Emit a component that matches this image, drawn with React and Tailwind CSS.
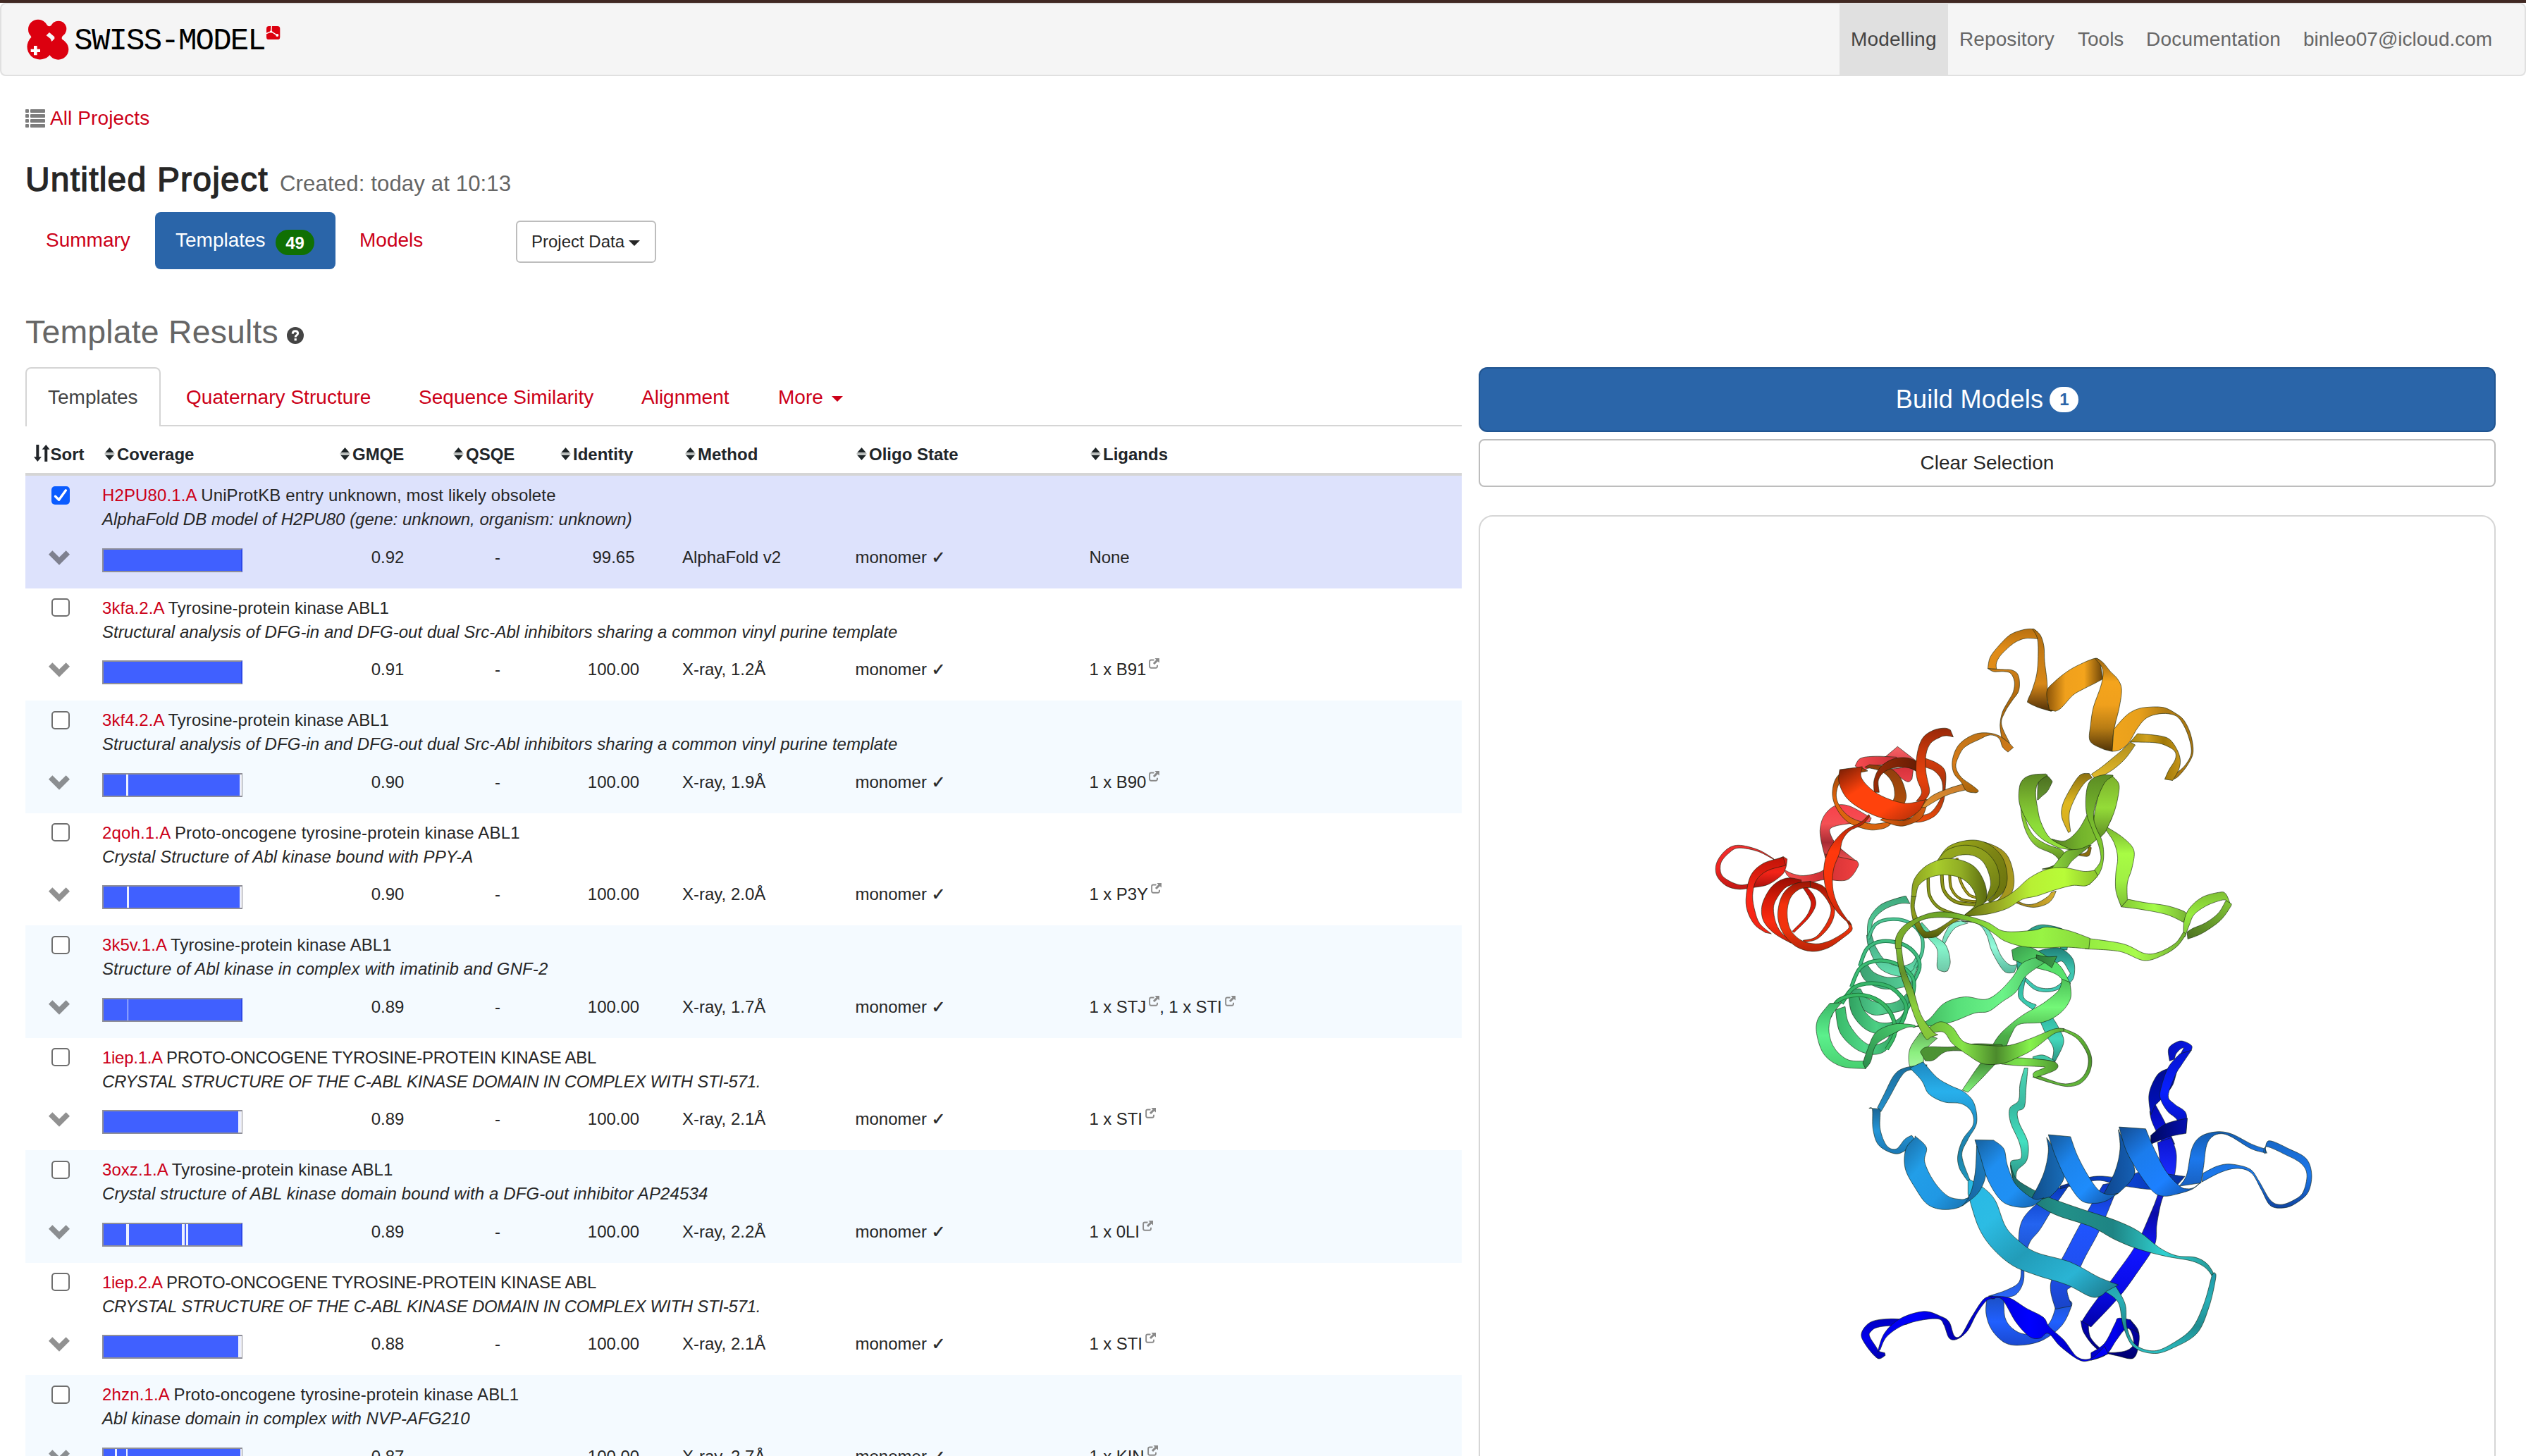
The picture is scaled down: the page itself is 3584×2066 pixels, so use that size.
import React from "react";

const ROWS = [
  { id: "H2PU80.1.A", name: "UniProtKB entry unknown, most likely obsolete", nameCls: "tracking-[0.13px]", descCls: "tracking-[0.01px]", desc: "AlphaFold DB model of H2PU80 (gene: unknown, organism: unknown)", gmqe: "0.92", identity: "99.65", method: "AlphaFold v2", ligands: [], gaps: [], full: true, selected: true },
  { id: "3kfa.2.A", name: "Tyrosine-protein kinase ABL1", nameCls: "tracking-[0.05px]", descCls: "tracking-[0.05px]", desc: "Structural analysis of DFG-in and DFG-out dual Src-Abl inhibitors sharing a common vinyl purine template", gmqe: "0.91", identity: "100.00", method: "X-ray, 1.2Å", ligands: ["B91"], gaps: [], full: true },
  { id: "3kf4.2.A", name: "Tyrosine-protein kinase ABL1", nameCls: "tracking-[0.05px]", descCls: "tracking-[0.05px]", desc: "Structural analysis of DFG-in and DFG-out dual Src-Abl inhibitors sharing a common vinyl purine template", gmqe: "0.90", identity: "100.00", method: "X-ray, 1.9Å", ligands: ["B90"], gaps: [[32, 3], [193, 3]] },
  { id: "2qoh.1.A", name: "Proto-oncogene tyrosine-protein kinase ABL1", nameCls: "tracking-[0.16px]", descCls: "tracking-[0.1px]", desc: "Crystal Structure of Abl kinase bound with PPY-A", gmqe: "0.90", identity: "100.00", method: "X-ray, 2.0Å", ligands: ["P3Y"], gaps: [[33, 3], [193, 3]] },
  { id: "3k5v.1.A", name: "Tyrosine-protein kinase ABL1", nameCls: "tracking-[0.05px]", descCls: "tracking-[0.11px]", desc: "Structure of Abl kinase in complex with imatinib and GNF-2", gmqe: "0.89", identity: "100.00", method: "X-ray, 1.7Å", ligands: ["STJ", "STI"], gaps: [[34, 1]], full: true },
  { id: "1iep.1.A", name: "PROTO-ONCOGENE TYROSINE-PROTEIN KINASE ABL", nameCls: "tracking-[-0.28px]", descCls: "tracking-[-0.26px]", desc: "CRYSTAL STRUCTURE OF THE C-ABL KINASE DOMAIN IN COMPLEX WITH STI-571.", gmqe: "0.89", identity: "100.00", method: "X-ray, 2.1Å", ligands: ["STI"], gaps: [[191, 5]] },
  { id: "3oxz.1.A", name: "Tyrosine-protein kinase ABL1", nameCls: "tracking-[0.05px]", descCls: "tracking-[0.12px]", desc: "Crystal structure of ABL kinase domain bound with a DFG-out inhibitor AP24534", gmqe: "0.89", identity: "100.00", method: "X-ray, 2.2Å", ligands: ["0LI"], gaps: [[32, 4], [111, 4], [117, 3]], full: true },
  { id: "1iep.2.A", name: "PROTO-ONCOGENE TYROSINE-PROTEIN KINASE ABL", nameCls: "tracking-[-0.28px]", descCls: "tracking-[-0.26px]", desc: "CRYSTAL STRUCTURE OF THE C-ABL KINASE DOMAIN IN COMPLEX WITH STI-571.", gmqe: "0.88", identity: "100.00", method: "X-ray, 2.1Å", ligands: ["STI"], gaps: [[191, 5]] },
  { id: "2hzn.1.A", name: "Proto-oncogene tyrosine-protein kinase ABL1", nameCls: "tracking-[0.16px]", descCls: "tracking-[0.03px]", desc: "Abl kinase domain in complex with NVP-AFG210", gmqe: "0.87", identity: "100.00", method: "X-ray, 2.7Å", ligands: ["KIN"], gaps: [[16, 3], [32, 2], [194, 2]] },
];

/* ---------- icons ---------- */

function Logo() {
  return (
    <svg viewBox="20 30 190 185" className="h-[61.7px] w-[63.3px] shrink-0">
      <g fill="#dc000f">
        <circle cx="71" cy="80" r="42" />
        <circle cx="158" cy="78" r="34" />
        <circle cx="79" cy="154" r="54.5" />
        <circle cx="157" cy="165" r="44" />
        <path d="M100 50 Q120 82 136 52 L184 100 Q160 120 184 130 L130 190 Q121 182 112 194 L40 110 Q46 108 40 100 Z" />
      </g>
      <path d="M106 106 L119 93 L141 112 V120 L129 132 L124 120 Z" fill="#f6f6f6" />
      <path d="M53 150 H67 V164 H80 V177 H67 V190 H53 V177 H40 V164 H53 Z" fill="#fff" />
    </svg>
  );
}

function LogoTag() {
  return (
    <svg viewBox="0 0 58 58" className="h-[19.3px] w-[19.3px] shrink-0">
      <rect width="58" height="58" rx="11" fill="#dc000f" />
      <path d="M22 0 L20 23 L0 32 M20 23 L45 39" stroke="#fff" strokeWidth="4.5" fill="none" />
      <circle cx="20" cy="24" r="5" fill="#fff" />
      <circle cx="46" cy="39" r="6" fill="#fff" />
    </svg>
  );
}

function ListIcon() {
  return (
    <svg viewBox="0 0 28 26" className="h-[26px] w-[28px] shrink-0" fill="#7d7d7d">
      {[0, 7, 14, 21].map((y) => (
        <React.Fragment key={y}>
          <rect x="0" y={y} width="5" height="5" rx="1" />
          <rect x="7" y={y} width="21" height="5" rx="1" />
        </React.Fragment>
      ))}
    </svg>
  );
}

function HelpIcon() {
  return (
    <svg viewBox="0 0 24 24" className="h-6 w-6 shrink-0">
      <circle cx="12" cy="12" r="12" fill="#444" />
      <path d="M8.2 9.6 Q8.4 5.8 12 5.8 Q15.6 5.8 15.6 9 Q15.6 10.8 13.6 12 Q12.2 12.8 12.2 14.4" stroke="#fff" strokeWidth="3" fill="none" />
      <rect x="10.6" y="16.2" width="3.2" height="3.2" fill="#fff" />
    </svg>
  );
}

function SortArrows() {
  return (
    <svg viewBox="0 0 68 72" className="h-6 w-[22.6px] shrink-0" fill="#212529">
      <path d="M10 0 H22 V52 H33 L16 72 L0 52 H10 Z" />
      <path d="M46 72 H58 V20 H68 L52 0 L35 20 H46 Z" />
    </svg>
  );
}

function SortIcon() {
  return (
    <svg viewBox="0 0 44 54" className="h-[18px] w-[15px] shrink-0">
      <path d="M22 0 L41 22 H3 Z M3 32 H41 L22 54 Z" fill="#1d2426" />
      <rect x="1" y="23" width="42" height="7" fill="#b9bdbb" />
    </svg>
  );
}

function Caret({ className }) {
  return (
    <svg viewBox="0 0 16 8" className={className} fill="currentColor">
      <path d="M0 0 H16 L8 8 Z" />
    </svg>
  );
}

function ExternalIcon() {
  return (
    <svg viewBox="0 0 16 16" className="ml-[4px] inline-block h-[15px] w-[15px] align-[9px]">
      <path d="M8 2.6 H3.5 Q1.2 2.6 1.2 5 V12.3 Q1.2 14.6 3.5 14.6 H10.5 Q12.8 14.6 12.8 12.3 V10.5" stroke="#8a8a8a" strokeWidth="2" fill="none" />
      <path d="M9 0 H16 V7 L13.5 4.8 L8.6 9.7 L6.3 7.4 L11.2 2.5 Z" fill="#8a8a8a" />
    </svg>
  );
}

function Chevron() {
  return (
    <svg viewBox="0 0 90 62" className="mt-[7px] ml-[33px] block h-[21px] w-[30px]">
      <path d="M16 0 L45 29 L74 0 L90 17 L45 62 L0 17 Z" fill="#000" opacity="0.43" />
    </svg>
  );
}

function Check({ checked }) {
  return checked ? (
    <svg viewBox="0 0 26 26" className="h-[26px] w-[26px]">
      <rect width="26" height="26" rx="5" fill="#0a5cff" />
      <path d="M5.5 14.2 L10.6 19.2 L20.4 5.8" stroke="#fff" strokeWidth="3.4" fill="none" strokeLinecap="round" strokeLinejoin="round" />
    </svg>
  ) : (
    <div className="h-[26px] w-[26px] rounded-[5px] border-2 border-[#6f6f6f] bg-white" />
  );
}

/* ---------- protein ribbon drawing ---------- */

/* Ribbon coordinates are digitised on two grids, each with its own origin and step. */
const UPPER = { ox: 2400, oy: 860, sx: 1 / 1.96, sy: 1 / 2.8 };
const LOWER = { ox: 2550, oy: 1240, sx: 1 / 2.0632, sy: 1 / 2.1778 };

function parse(text, f) {
  return text.trim().split(/\s+/).map((p) => {
    const [x, y] = p.split(",").map(Number);
    return [f.ox + x * f.sx, f.oy + y * f.sy];
  });
}

function curve(pts) {
  let d = "";
  for (let i = 0; i < pts.length - 1; i++) {
    const p0 = pts[i - 1] || pts[i];
    const p1 = pts[i];
    const p2 = pts[i + 1];
    const p3 = pts[i + 2] || p2;
    const c = [
      p1[0] + (p2[0] - p0[0]) / 6, p1[1] + (p2[1] - p0[1]) / 6,
      p2[0] - (p3[0] - p1[0]) / 6, p2[1] - (p3[1] - p1[1]) / 6,
      p2[0], p2[1],
    ].map((n) => n.toFixed(1));
    d += ` C${c[0]} ${c[1]} ${c[2]} ${c[3]} ${c[4]} ${c[5]}`;
  }
  return d;
}

const DIRS = { h: [0, 0, 1, 0], v: [0, 0, 0, 1], d: [0, 0, 1, 1], u: [0, 1, 1, 0] };

function Ribbon({ n, f, s }) {
  const [a, b, colors, dir = "v"] = s;
  const cs = colors.split(" ");
  const id = `rb${n}`;
  const [x1, y1, x2, y2] = DIRS[dir];
  const A = parse(a, f);
  if (!b) {
    const d = `M${A[0][0]} ${A[0][1]}` + curve(A);
    return (
      <g fill="none">
        <path d={d} stroke={cs[0]} strokeWidth={s[4] || 5} />
        <path d={d} stroke={cs[1]} strokeWidth={(s[4] || 5) - 2} />
      </g>
    );
  }
  const B = parse(b, f).reverse();
  const d = `M${A[0][0].toFixed(1)} ${A[0][1].toFixed(1)}${curve(A)} L${B[0][0].toFixed(1)} ${B[0][1].toFixed(1)}${curve(B)} Z`;
  return (
    <g>
      <linearGradient id={id} x1={x1} y1={y1} x2={x2} y2={y2}>
        {cs.map((c, i) => (
          <stop key={i} offset={cs.length > 1 ? i / (cs.length - 1) : 0} stopColor={c} />
        ))}
      </linearGradient>
      <path d={d} fill={`url(#${id})`} stroke="#10200c" strokeOpacity="0.6" strokeWidth="1" strokeLinejoin="round" />
    </g>
  );
}

const BACK = [
  ["425,210 430,190 450,155 480,145", "430,220 445,190 465,165 500,152", "#8ff5d4 #6fd8b8"],
  ["480,145 530,155 555,190 570,240 605,300 635,305", "520,150 550,160 575,200 595,250 620,280 645,280", "#5fcfae #94fbdc #58b89c"],
  ["355,160 385,200 410,235 410,290 430,303", "365,150 400,190 435,220 448,270 440,300", "#4fc896 #86f5cc #6fc8a8"],
  ["205,190 210,140 245,95 310,70 320,72", "218,190 222,145 255,110 300,92 330,92", "#3fa87c #5cd8a4"],
  ["203,190 210,230 240,290 290,315 330,310 355,270", "218,190 232,230 260,270 300,285 335,275 350,250", "#40a880 #66e0b0", "v"],
  ["180,290 200,330 250,355 310,350 335,330 355,280", "205,280 225,305 265,320 310,315 335,300 352,275", "#3aa070 #5cd8a0", "h"],
  ["155,355 175,400 220,435 270,430 310,420 330,390", "185,355 205,385 250,400 290,395 320,370 330,350", "#34a068 #54d090 #3aa470", "h"],
  ["150,370 160,430 200,480 260,500 290,490 315,450", "178,370 195,420 230,455 270,460 300,445 315,420", "#30a060 #4cd084 #35a068", "h"],
  ["112,420 125,490 170,540 220,558 260,545 285,500", "140,410 150,460 185,510 220,530 260,515 280,480", "#38b868 #50d888 #34a465", "h"],
  ["208,200 230,155 280,140 330,152 363,190 366,240 345,290", null, "#2a8058 #4cc494", "v", 5],
  ["183,285 205,230 250,208 310,218 348,250 358,290 335,345", null, "#1f7a4c #3fbc80", "v", 5.5],
  ["158,350 185,290 240,268 300,283 340,325 337,380 320,420", null, "#1f7a48 #3cbc74", "v", 5.5],
  ["130,400 165,352 220,338 280,355 318,405 308,455 285,490", null, "#1c7a42 #36b468", "v", 6],
  ["95,440 120,392 180,374 240,393 278,440 285,495 262,542", null, "#1c7a3c #38b864", "v", 6],
  ["95,400 60,450 58,500 80,560 130,595 200,602", "130,398 100,440 93,490 110,540 150,575 205,578", "#3cb868 #5cf08c #48d070"],
  ["650,200 690,165 730,158 790,180 790,235", "665,200 700,180 740,170 770,185 770,235", "#2c9c88 #30a898", "h"],
  ["700,240 730,232 770,230 805,260 812,300 800,335 750,362 700,360 665,330", "735,275 750,280 775,270 795,300 798,310 785,325 750,352 705,350 670,322", "#208078 #3cc4b0 #40c8b4"],
  ["640,240 648,340 650,385 690,420", "650,240 668,310 662,380 700,405", "#2aa090 #3cd0b4"],
  ["712,458 730,500 750,540 745,578", "745,440 765,475 780,520 755,580", "#30b8a4 #44d8bc #2a9484"],
  ["690,565 720,560 755,578", "690,575 720,575 755,580", "#40c8a8"],
  ["665,600 652,650 648,700 622,725 625,770 650,830 655,878 625,890 630,940", "675,600 670,660 665,720 645,735 650,770 675,830 672,885 645,915 640,940", "#50d8b8 #38b8a0 #44e0c0 #2a9084"],
];

const MID = [
  ["360,490 330,540 328,590 345,615", "410,508 375,545 370,590 375,605", "#66b45c #8cf080 #b0f8a8"],
  ["628,235 660,222 690,230 730,255 770,285 800,340", "632,265 680,285 740,302 770,320 785,350", "#3a9c4c #54dc68 #5ce870", "d"],
  ["340,475 385,450 430,400 490,380 550,388 590,365 630,320 660,275 710,255", "345,472 410,468 460,455 520,430 560,425 600,395 640,365 670,315 730,270", "#3cae58 #58e07a #6cf488 #48b85c", "h"],
  ["700,250 730,256 760,255", "700,262 725,275 745,290", "#2c7838 #3c9c48", "h"],
  ["775,325 765,360 720,400 670,430 630,460 590,500 560,550 520,610 483,668", "798,335 800,385 770,430 720,458 650,465 625,500 600,560 560,610 500,675", "#4cc058 #74f878 #4cae48 #48963c #84f47c"],
  ["200,602 215,580 230,530 270,500 320,475 345,474", "192,585 205,545 230,490 280,465 320,464 345,468", "#2c8c4c #4cd470", "u"],
  // N-terminal strands
  ["765,970 690,1030 655,1080 648,1150 655,1210 650,1260 615,1285 560,1305", "792,968 745,1040 710,1100 680,1140 665,1200 662,1260 640,1300 600,1310", "#0838c0 #2464f0 #1c50c8 #2c68f8"],
  ["555,1310 553,1360 570,1410 610,1450 660,1456 720,1440 775,1395 803,1335 800,1320", "605,1310 608,1370 630,1405 665,1422 710,1415 740,1385 756,1340 758,1310", "#1c50c8 #2060ff #1a48d0"],
  ["895,960 830,1080 790,1160 748,1245 742,1290 756,1345", "945,950 890,1090 840,1190 805,1270 790,1288 803,1335", "#0c34c0 #1f54ff #2050f0 #1844c8"],
  ["1032,735 1040,770 1070,835", "1048,712 1075,765 1105,835", "#0008b0 #1018f0"],
  ["1055,830 1062,900 1058,980 1030,1060 990,1150 930,1240 860,1340 832,1385", "1095,815 1110,870 1100,950 1070,1000 1053,1080 1045,1150 990,1240 940,1310 860,1400", "#0c14d0 #1a2cff #0a0ca8 #1014ff #0a0ce8 #0000a8"],
  ["830,1380 840,1420 880,1470 940,1490 985,1496 1000,1450 998,1410 975,1378", "852,1395 860,1435 900,1475 940,1478 970,1470 985,1450 975,1410 945,1385", "#0000b8 #000070"],
  ["860,1480 900,1450 930,1390 940,1373 975,1378", "860,1503 905,1485 935,1440 965,1405 1000,1420", "#0000c8 #0000f0 #000080", "h"],
  ["1035,745 1030,680 1055,620 1090,600", "1048,715 1080,680 1100,650 1112,605", "#000c90 #0010c0"],
  ["1090,578 1087,540 1110,520 1130,517 1154,530 1154,545", "1105,572 1108,558 1120,543 1131,537 1128,545 1120,560", "#0410c0 #0818e8", "h"],
  ["1154,545 1125,590 1108,620 1086,685 1105,712 1138,740 1138,800", "1120,556 1085,600 1063,670 1065,700 1085,735 1112,760 1120,800", "#0614d0 #0820ff #0410b8"],
  ["1035,808 1080,772 1142,755", "1035,835 1090,812 1138,802", "#000860 #0410b0", "h"],
  ["770,965 870,935 960,940 1000,922 1060,925 1135,935", "770,973 870,948 920,955 960,965 1040,975 1110,965", "#0a2c90 #0a44d8 #08309c", "h"],
  ["345,1380 270,1375 215,1385 188,1420 200,1455 235,1497 258,1488", "320,1392 240,1400 215,1415 212,1430 230,1460 240,1475 256,1480", "#0000c0 #0000f0 #0000b0"],
  ["235,1478 255,1420 300,1375 370,1352 420,1367 445,1385 460,1428 480,1425 510,1370 545,1315 572,1304", "243,1470 262,1430 310,1395 370,1378 415,1376 430,1395 445,1435 470,1437 500,1410 525,1360 555,1318 578,1313", "#0000e8 #0000ff #0000b0 #0000f0", "h"],
  ["565,1305 620,1310 670,1342 720,1370 738,1400 780,1440 820,1493 860,1497 900,1460", "570,1313 600,1315 640,1385 680,1430 710,1435 735,1420 770,1460 825,1502 860,1503 910,1483", "#0000d8 #0000ff #0000d0 #0000ff", "h"],
  // teal strands
  ["625,900 640,940 680,970 750,1005 830,1035 930,1070 1000,1105 1060,1155 1110,1180 1165,1185 1200,1205 1222,1240", "635,965 650,985 700,1020 760,1055 860,1090 930,1130 1000,1160 1080,1182 1150,1195 1185,1210 1205,1228 1215,1245", "#1c6868 #229088 #1e8484 #30d0d0 #249898", "h"],
  ["900,1290 940,1325 955,1400 985,1462 1045,1482 1100,1465 1170,1420 1205,1340 1225,1250 1222,1232", "930,1270 960,1330 965,1400 990,1455 1045,1474 1100,1450 1155,1405 1190,1330 1213,1245 1215,1238", "#2098a8 #28b0b8 #208c90 #2cc0c4"],
  ["500,990 530,1090 570,1155 630,1210 700,1240 790,1270 855,1305 885,1306 905,1290", "500,942 545,970 580,1010 610,1090 650,1135 700,1170 800,1200 880,1245 940,1270", "#28b8e4 #2cbce4 #229cb8 #2ab4d4 #1c7484", "d"],
  // blue loop and helix
  ["380,590 320,598 285,620 255,680 235,722", "370,608 330,606 305,625 270,690 245,735", "#1a6c9c #2690cc"],
  ["210,724 220,728 222,790 240,840 290,865 330,845 350,828", "240,726 243,735 243,790 262,840 290,850 315,820 335,808", "#1a6494 #2496d8 #1b78b4"],
  ["368,581 410,630 450,655 490,675 518,710 525,770 500,820 482,870 505,945", "330,600 365,640 385,680 430,705 480,710 510,735 515,775 485,820 470,870 475,910 498,948", "#1e88c0 #28b0ec #2090c8 #1c80a8 #2098c0"],
  ["450,1032 500,1000 520,930 525,840", "485,1025 530,985 552,930 545,870", "#145c94 #1e80c4", "u"],
  ["345,815 318,850 316,910 345,970 380,1020 425,1037 475,1030 500,1005", "345,810 378,845 373,890 400,950 440,995 480,1006 495,1003 502,1001", "#1a6ca4 #229ee8 #2098e4 #1870ac", "d"],
  ["680,1015 720,930 735,860 730,815", "740,998 765,970 782,930 765,870", "#104c88 #186cb8", "h"],
  ["520,822 535,870 560,950 600,1012 650,1030 690,1025 720,1003", "575,823 605,850 615,900 640,960 690,1003 715,1003 722,1001", "#16609c #1f8ef0 #1f90f4 #145ca4", "d"],
  ["890,1003 930,920 945,850 940,790", "940,987 975,950 988,915 965,850", "#0e448c #1560b4", "h"],
  ["735,806 755,870 790,950 830,1008 870,1018 905,1010 935,990", "800,812 820,870 850,930 880,975 905,990 925,990 938,988", "#155898 #1c84ec #1e8cfc #124f9c", "d"],
  ["1375,863 1330,850 1270,812 1240,803 1215,812 1198,840 1190,900 1182,955", "1370,850 1330,835 1270,803 1225,797 1180,812 1155,850 1140,930 1118,965", "#145cb0 #1c78ec #1860c0"],
  ["942,782 965,860 1010,940 1045,985 1075,996 1110,990 1155,975 1180,955", "1020,788 1045,850 1080,920 1120,965 1140,973 1160,970 1175,958", "#134c90 #1b7cec #1c80ff #114a9c", "d"],
  ["1370,865 1380,825 1440,850 1490,880 1506,930 1495,985 1460,1018 1425,1032 1385,1025 1358,975 1330,925 1290,910 1240,922 1185,952", "1365,860 1375,843 1430,868 1475,895 1492,930 1480,985 1450,1010 1415,1022 1385,1008 1352,950 1325,912 1270,897 1230,903 1188,925", "#1868c8 #1c78ec #1044a0"],
  // front green loop
  ["780,478 830,505 860,560 857,610 830,647 790,657 740,645 690,628", "780,486 820,510 850,560 848,605 825,637 785,649 740,637 695,618", "#6cc43c #4c902c #64b83c"],
  ["560,575 620,568 700,572 755,582 757,605 695,630", "600,588 640,592 700,595 725,598 695,612 690,622", "#66c040 #7ce44c #509830", "h"],
  ["360,550 380,535 450,535 520,525 600,528", "375,578 400,575 440,548 520,550 600,560", "#4c9434 #4a8c30", "h"],
  ["385,475 420,457 455,475 490,520 560,530 620,530 680,510 750,480 780,478", "400,490 430,490 455,525 500,560 545,587 600,586 640,570 690,543 750,495 780,487", "#6cb838 #86e448 #4c8a2c #86f44c #5ca83c", "h"],
];

const TOP = [
  // red helices
  ["538,600 573,558", "600,640 622,612", "#f86468 #d83c44"],
  ["548,648 590,640 620,615", "570,670 600,698 613,688", "#d02c38 #e84048"],
  ["455,635 470,605 510,597 570,600", "475,655 500,640 530,630 580,625", "#f84c50 #c42c34", "h"],
  ["500,842 440,795 400,793 370,830 358,880 360,930 372,1000", "495,858 460,862 420,868 390,880 385,900 405,950 460,1015", "#f8404a #f45054 #a82c34 #f45454"],
  ["372,985 370,1045 320,1070 285,1065 258,1048", "460,1012 463,1035 432,1088 370,1087 330,1098 290,1095 265,1068", "#f85050 #d03034 #f04040", "h"],
  ["228,1003 185,968 130,950 95,970 70,1020 70,1070 95,1110 130,1125 165,1120", "230,1008 185,975 132,961 105,980 82,1020 83,1065 105,1092 135,1108 160,1104", "#f03030 #f02420 #c01814"],
  ["158,1120 210,1108 250,1070 262,1040 266,1005", "165,1080 180,1045 215,1020 255,995", "#d81c14 #f42418 #a8100c"],
  ["320,1115 340,1150 345,1190 325,1240 285,1297", "308,1115 328,1160 332,1190 318,1235 280,1292", "#c01408 #e8200c"],
  ["255,998 200,1022 165,1070 152,1150 155,1210 175,1265 205,1297", "262,1030 210,1052 180,1090 170,1150 176,1210 190,1262 222,1302", "#c01408 #ff2818 #f02414"],
  ["305,1088 270,1080 240,1095 215,1130 196,1190 200,1250 230,1300 275,1338", "305,1098 285,1105 260,1120 238,1160 228,1200 235,1260 255,1305 290,1340", "#980c04 #d81c08 #fc2c10 #cc2008"],
  ["330,1093 365,1112 385,1150 398,1210 385,1270 350,1322 315,1335", "330,1118 355,1132 378,1170 388,1210 375,1262 345,1315 310,1328", "#981404 #e82c0c #dc2c0c"],
  ["330,1093 285,1105 252,1150 240,1230 255,1300 290,1352 335,1372 380,1358 420,1320 445,1290 445,1268 438,1250", "330,1118 300,1125 275,1160 266,1220 275,1285 305,1328 345,1342 380,1332 410,1310 430,1290 438,1275 433,1255", "#981404 #f4300c #f0340c #b82408"],
  ["470,640 410,670 392,735 402,800 435,858 490,888 530,885 550,872", "490,655 425,680 403,740 412,795 445,842 500,865 540,860 560,855", "#904008 #e0640c #d86410"],
  ["482,640 530,658 558,700 565,750 558,780", "495,630 545,640 580,680 597,750 590,790", "#8c3c0c #b0500c"],
  ["640,600 680,622 705,655 706,720 700,780 680,830 640,857 600,855 580,848", "650,640 675,655 695,690 698,740 685,785 665,820 640,832 610,842 590,846", "#d83c0c #a0340c #f04c0c"],
  ["525,850 570,872 600,870 640,840 658,770", "540,835 580,852 610,842 635,800 645,765", "#e06010 #b04808 #d85c10", "h"],
  ["508,740 508,690 525,640 560,608 600,603 635,622", "522,740 520,690 540,655 575,640 610,645 635,668", "#982c08 #641c04", "h"],
  ["412,650 410,700 430,760 470,805 520,838 560,850 600,845 635,810 650,770", "475,638 472,680 500,728 540,762 590,783 620,780 645,770 652,765", "#701c04 #ff420c #ff420c #a02c08", "d"],
  ["625,775 640,740 628,690 624,640 630,570 645,520 675,492 705,485 720,492", "650,770 662,735 652,660 652,590 665,545 690,522 708,515 728,520", "#982808 #c8380c #e8420c #c4380c"],
  ["493,828 470,860 430,888 400,930 378,980 368,1040 370,1100 382,1160 405,1215 438,1262", "496,835 475,868 440,893 420,930 412,980 396,1040 392,1100 398,1155 415,1208 445,1268", "#a02008 #ff380c #f8340c #b82008"],
  // orange
  ["640,800 655,770 680,745 720,722 765,703", "650,800 670,782 700,758 730,742 770,728", "#c87c2c #e09030"],
  ["880,580 865,560 855,525 830,512 800,530 760,560 742,600 735,640 750,680 780,712 797,732 795,740", "895,562 880,540 855,515 825,504 790,508 755,535 735,570 725,620 730,665 750,700 765,735 790,742", "#c07418 #d87c18 #a8640c", "v"],
  ["862,520 858,470 865,420 882,375 895,340 898,300 888,268 870,260 840,260 824,248", "885,545 862,470 872,420 892,375 909,340 912,300 906,268 890,254 870,252 845,250", "#d08018 #a8640c #c87818"],
  ["824,248 830,205 850,165 885,115 920,95 948,91 962,102", "848,250 848,225 860,195 885,160 905,140 930,128 962,130", "#b87010 #e08c18 #e08c18"],
  ["948,91 962,130 964,200 960,270 948,330 935,375 938,385 965,403 1000,418", "952,91 970,115 980,160 982,220 988,290 990,345 990,385 1005,415", "#b06c10 #c87c14 #d88818 #503008"],
  ["995,412 988,340 1010,300 1050,255 1090,225 1122,208 1135,214", "1012,418 1028,405 1060,355 1085,333 1120,308 1144,290", "#8c5408 #f0a01c #f4a41c #6c4408", "h"],
  ["1122,208 1143,250 1140,310 1118,400 1110,470 1108,535 1140,565 1168,577", "1128,208 1145,225 1165,260 1185,290 1196,330 1190,400 1178,470 1172,520 1174,575", "#9c6410 #f4a41c #f0a01c #b87c14 #503408"],
  ["1174,490 1205,440 1230,415 1260,403 1310,402 1345,425 1370,455 1388,510 1395,580 1380,630 1355,675 1338,690", "1170,577 1190,572 1215,545 1240,485 1265,445 1300,428 1335,430 1358,450 1380,510 1390,580 1374,630 1345,668 1330,680", "#f0a41c #e8a01c #b07c14 #a87410", "h"],
  ["1316,688 1328,650 1345,610 1345,580 1325,558 1290,543 1220,540", "1338,693 1355,650 1359,610 1350,570 1330,530 1300,515 1240,507", "#a8840c #d0a01c #a07808 #c49418", "h"],
  ["1220,540 1195,575 1170,605 1140,640 1112,668", "1234,552 1210,600 1185,635 1155,665 1122,685", "#b08c1c #e4bc2c"],
  ["1106,665 1080,672 1052,730 1032,790 1030,840 1048,900", "1114,682 1095,700 1075,740 1055,800 1050,840 1054,895", "#8c7010 #e0b820 #d4ac20"],
  ["1105,950 1098,978 1070,988", "1112,960 1105,992 1085,993", "#8c6c10"],
  // yellow-olive helix
  ["885,1140 900,1165 930,1185 960,1180 990,1155 1000,1138", "895,1175 930,1193 960,1196 990,1182 1005,1160 1014,1132", "#8c7014 #d8b030", "h"],
  ["700,1010 720,955 780,935 830,945 875,985 895,1060 893,1130 865,1180 820,1195", "715,1000 750,975 790,965 830,985 868,1040 875,1100 862,1150 840,1180 800,1190", "#848c14 #9c9018 #a89820", "h"],
  ["738,1000 745,1080 770,1145 800,1160", null, "#5c5808 #a89c20", "v", 4],
  ["718,1050 722,1120 750,1165 800,1175", null, "#5c5808 #989418", "v", 4],
  ["696,1065 702,1130 735,1175 800,1188", null, "#50540c #8c9418", "v", 5],
  ["658,1080 662,1150 690,1200 750,1232", null, "#50580c #88981c", "v", 4.5],
  ["683,1015 715,955 775,930 825,945 865,1000 878,1080 865,1140 830,1178", "715,1000 745,970 785,962 820,985 845,1040 852,1090 845,1140 825,1170", "#a4b41c #7c8414 #68700c", "d"],
  ["680,1018 710,970 760,950 810,968 845,1020 857,1090 845,1140 815,1178", "715,1008 745,990 780,990 808,1012 825,1055 832,1105 822,1150 815,1172", "#98ac20 #8c9c1c #687410", "d"],
  ["624,1150 620,1200 632,1250 648,1290 665,1292 690,1278 730,1240", "612,1150 610,1200 620,1265 642,1313 657,1318 685,1310 720,1265 770,1230", "#7c941c #909c1c #50580c"],
  ["612,1155 618,1090 650,1035 700,1005 750,1010 790,1040 815,1100 820,1160 800,1200 775,1230", "624,1155 632,1110 660,1080 700,1068 745,1078 775,1110 790,1150 788,1190 760,1226", "#8ca020 #a8cc2c #90ac24 #5c6c10", "h"],
  // green upper domain
  ["915,790 920,850 935,910 960,955 1005,985 1022,1015 1000,1035 975,1045", "935,790 930,850 950,910 985,945 1030,970 1042,1005 1036,1040 990,1045", "#7cbc30 #90d438 #4c741c"],
  ["1000,925 1040,932 1075,890 1100,830", "1030,960 1075,970 1112,945 1150,890 1170,840", "#547c20 #74b42c #88c834", "h"],
  ["1003,695 985,672 965,700 962,770", "1003,700 990,735 975,755 964,770", "#4c7020 #649430"],
  ["985,667 950,670 925,685 912,720 913,790 940,870 975,925 1020,960", "990,672 965,700 957,740 962,800 972,860 1000,925 1060,970", "#5c8824 #78b42e #8cdc38 #94e03c"],
  ["1025,1000 1045,972 1080,965 1105,950", "1000,1045 1040,1042 1060,1010 1112,950", "#8cd83c #5c8c28", "h"],
  ["1150,885 1175,940 1185,1000 1180,1060 1180,1130 1195,1195", "1155,878 1200,920 1230,970 1225,1040 1212,1100 1212,1168", "#78b430 #a8fc44 #a0f044 #7cc034"],
  ["1195,1195 1250,1205 1320,1225 1368,1256", "1214,1165 1260,1178 1320,1190 1365,1210 1380,1225", "#84c834 #a4fc48 #78b434", "h"],
  ["1155,674 1130,760 1118,870 1130,930", "1168,672 1188,705 1187,750 1175,820 1150,900", "#7cb02c #94dc38 #5c8824"],
  ["1172,672 1140,672 1110,692 1098,740 1098,820 1115,890 1132,950 1138,1010 1118,1053", "1172,676 1150,700 1130,760 1118,830 1125,880 1142,935 1146,1000 1135,1060 1105,1108", "#5c8c24 #74b42c #80c830 #90d834"],
  ["757,1230 800,1190 860,1165 900,1130 940,1080 990,1045 1040,1040 1090,1054 1122,1050", "770,1232 830,1222 880,1200 920,1165 960,1152 1010,1128 1060,1110 1100,1110 1130,1072", "#606c10 #98a824 #b8f034 #b8fc38 #8cc42c", "h"],
  ["1368,1310 1370,1250 1385,1200 1420,1157 1465,1138 1485,1142 1500,1190", "1372,1315 1385,1265 1398,1225 1430,1192 1465,1172 1485,1168 1492,1185", "#80c034 #98ec40 #80c438"],
  ["1380,1323 1420,1300 1470,1250 1500,1192 1498,1180", "1378,1295 1395,1280 1430,1258 1465,1220 1486,1170", "#4c7020 #84c838", "u"],
  ["1368,1295 1345,1340 1300,1375 1260,1380 1200,1342 1100,1320", "1376,1303 1350,1352 1310,1388 1258,1408 1190,1372 1095,1362", "#94ec40 #a8fc4c #70ac30", "h"],
  ["1108,1320 1050,1290 990,1275 950,1288 870,1292 820,1255 740,1222 670,1218 600,1260 570,1310 567,1360", "1105,1362 1040,1355 980,1358 920,1352 870,1330 840,1300 800,1265 730,1240 660,1240 620,1265 590,1310 583,1360", "#7cac2c #6ca428 #8ce03c #98f444 #88d83c", "h"],
];

const TAIL = [
  ["287,205 296,285 318,360 345,445 375,508 390,505", "303,208 314,290 340,360 362,435 395,485 412,497", "#8cc834 #64902c #8cd03c #84c438"],
];

function Protein() {
  let n = 0;
  const draw = (list, f) => list.map((s) => <Ribbon key={n} n={n++} f={f} s={s} />);
  return (
    <svg viewBox="2100 733 1439 1400" className="block h-[1400px] w-[1439px]">
      {draw(BACK, LOWER)}
      {draw(MID, LOWER)}
      {draw(TAIL, LOWER)}
      {draw(TOP, UPPER)}
    </svg>
  );
}

/* ---------- page parts ---------- */

function Navbar() {
  return (
    <header className="flex h-[104px] justify-between rounded-lg border-2 border-[#e0e0e0] bg-[#f5f5f5] pl-[35px] pr-8">
      <div className="flex items-start">
        <div className="pt-[19px]"><Logo /></div>
        <div className="ml-[5px] w-[272px] pt-[25px] font-['Liberation_Mono',monospace] text-[44px] leading-[54px] tracking-[-1.8px] whitespace-nowrap text-black">SWISS-MODEL</div>
        <div className="ml-[1px] pt-[31px]"><LogoTag /></div>
      </div>
      <nav className="flex text-[28px] leading-[40px] text-[#666]">
        <div className="w-[154px] bg-[#e0e0e0] pt-[30px] pl-4 tracking-[0.2px] text-[#444]">Modelling</div>
        <div className="w-[168px] pt-[30px] pl-4 tracking-[0.1px]">Repository</div>
        <div className="w-[97px] pt-[30px] pl-4">Tools</div>
        <div className="w-[223px] pt-[30px] pl-4 tracking-[0.2px]">Documentation</div>
        <div className="w-[298px] pt-[30px] pl-4">binleo07@icloud.com</div>
      </nav>
    </header>
  );
}

function ProjectHeader() {
  return (
    <section className="pl-9">
      <div className="flex h-[40px] items-center text-[28px] leading-[40px] text-[#cc0018]">
        <ListIcon />
        <span className="ml-[7px] tracking-[0.1px]">All Projects</span>
      </div>
      <div className="mt-[33px] flex h-[68px] items-baseline text-[48px] leading-[68px] text-[#262626]">
        <h1 className="w-[361px] tracking-[1.2px] [-webkit-text-stroke:1.4px_#262626]">Untitled Project</h1>
        <span className="text-[31.2px] tracking-[0.1px] text-[#666]">Created: today at 10:13</span>
      </div>
      <div className="mt-[12px] flex text-[28px] leading-[40px]">
        <div className="w-[184px] pt-5 pl-[29px] text-[#cc0018]">Summary</div>
        <div className="flex h-[81px] w-[256px] items-start rounded-lg bg-[#2a65a9] pt-5 pl-[29px] text-white">
          <span className="w-[142px]">Templates</span>
          <span className="mt-[5px] h-[36px] w-[55px] rounded-[18px] bg-[#107004] text-center text-[24px] font-bold leading-[37px]">49</span>
        </div>
        <div className="w-[256px] pt-5 pl-[34px] text-[#cc0018]">Models</div>
        <div className="mt-3 flex h-[60px] w-[199px] items-center rounded-md border-2 border-[#bdbdbd] pl-5 text-[24px] text-[#262626]">
          <span className="w-[138px]">Project Data</span>
          <Caret className="mt-1 h-2 w-4" />
        </div>
      </div>
      <div className="mt-[56px] flex h-[66px] items-center text-[#666]">
        <h2 className="w-[371px] text-[46.4px] leading-[66px] tracking-[0.2px]">Template Results</h2>
        <div className="pt-[10px]"><HelpIcon /></div>
      </div>
    </section>
  );
}

function Tabs() {
  return (
    <div className="flex h-[84px] text-[28px] leading-[40px] text-[#cc0018]">
      <div className="w-[192px] rounded-t-lg border-2 border-b-0 border-[#d5d5d5] pt-[21px] pl-[30px] text-[#444]">Templates</div>
      <div className="flex flex-1 border-b-2 border-[#d5d5d5] pt-[23px] whitespace-nowrap">
        <div className="w-[366px] pl-9 tracking-[0.05px]">Quaternary Structure</div>
        <div className="w-[316px] tracking-[0.05px]">Sequence Similarity</div>
        <div className="w-[194px]">Alignment</div>
        <div className="flex w-[100px]">
          <span className="w-[76px]">More</span>
          <Caret className="mt-[18px] h-2 w-4 shrink-0" />
        </div>
      </div>
    </div>
  );
}

const HEADS = [
  ["Coverage", "w-[334px]"],
  ["GMQE", "w-[161px]"],
  ["QSQE", "w-[152px]"],
  ["Identity", "w-[177px]"],
  ["Method", "w-[243px]"],
  ["Oligo State", "w-[332px]"],
  ["Ligands", "w-[300px]"],
];

function TableHead() {
  return (
    <div className="flex h-[70px] border-b-4 border-[#d5d5d5] pt-[22.5px] pl-3 text-[24px] font-bold leading-[34px] text-[#212529]">
      <div className="flex w-[100px] items-start">
        <div className="pt-[3px]"><SortArrows /></div>
        <span className="ml-px">Sort</span>
      </div>
      {HEADS.map(([label, w]) => (
        <div key={label} className={"flex items-start " + w}>
          <div className="pt-[7px]"><SortIcon /></div>
          <span className="ml-[3px]">{label}</span>
        </div>
      ))}
    </div>
  );
}

function Coverage({ gaps, full }) {
  return (
    <div className={"relative mt-1 h-[34px] w-[199px] border-2 border-[#8e8e98] bg-[#4060ff] " + (full ? "border-r-[#2c48e8]" : "")}>
      {gaps.map(([x, w]) => (
        <div key={x} className="absolute inset-y-0 bg-white/90" style={{ left: x, width: w }} />
      ))}
    </div>
  );
}

function Row({ row, index }) {
  const bg = row.selected ? "bg-[#dde2fc]" : index % 2 === 0 ? "bg-[#f4faff]" : "bg-white";
  return (
    <div className={"h-[159.5px] shrink-0 pt-[11px] text-[24px] leading-[34px] text-[#262626] " + bg}>
      <div className="flex h-[68px]">
        <div className="w-[109px] pt-[3.5px] pl-[37px]"><Check checked={row.selected} /></div>
        <div className="whitespace-nowrap">
          <div className={row.nameCls}><span className="text-[#cc0018]">{row.id}</span> {row.name}</div>
          <div className={"italic " + row.descCls}>{row.desc}</div>
        </div>
      </div>
      <div className="mt-[19.5px] grid grid-cols-[109px_344px_122px_190px_139px_28px_245.5px_332px_1fr] whitespace-nowrap">
        <div><Chevron /></div>
        <div><Coverage gaps={row.gaps} full={row.full} /></div>
        <div className="text-center">{row.gmqe}</div>
        <div className="text-center">-</div>
        <div className="text-center">{row.identity}</div>
        <div />
        <div>{row.method}</div>
        <div>monomer <span className="font-['DejaVu_Sans',sans-serif] text-[24px] leading-[20px] [-webkit-text-stroke:0.5px_#262626]">✓</span></div>
        <div className="h-[34px] tracking-[-0.1px]">
          {row.ligands.length === 0 && "None"}
          {row.ligands.map((l, i) => (
            <span key={l}>{i > 0 && ", "}1 x {l}<ExternalIcon /></span>
          ))}
        </div>
      </div>
    </div>
  );
}

function SidePanel() {
  return (
    <aside className="w-[1443px] shrink-0">
      <div className="flex h-[92px] items-center justify-center rounded-xl border-2 border-[#215591] bg-[#2a65a9] text-[36px] text-white">
        <span className="tracking-[0.3px]">Build Models</span>
        <span className="ml-[9px] h-[36px] w-[41px] rounded-[18px] bg-white text-center text-[24px] font-bold leading-[36px] text-[#2a65a9]">1</span>
      </div>
      <div className="mt-[10px] flex h-[68px] items-center justify-center rounded-lg border-2 border-[#bdbdbd] text-[28px] text-[#262626]">Clear Selection</div>
      <div className="mt-10 h-[1400px] overflow-hidden rounded-[20px] border-2 border-[#d6d6d6]">
        <Protein />
      </div>
    </aside>
  );
}

export default function App() {
  return (
    <div className="h-[2066px] w-[3584px] overflow-hidden bg-white font-['Liberation_Sans',Arial,sans-serif] text-[#262626]">
      <div className="h-1 bg-[#402822]" />
      <Navbar />
      <div className="h-[40px]" />
      <ProjectHeader />
      <div className="mt-[17px] flex items-start pl-9">
        <main className="w-[2038px]">
          <Tabs />
          <TableHead />
          {ROWS.map((row, i) => (
            <Row key={row.id} row={row} index={i} />
          ))}
        </main>
        <div className="w-[24px] shrink-0" />
        <SidePanel />
      </div>
    </div>
  );
}
